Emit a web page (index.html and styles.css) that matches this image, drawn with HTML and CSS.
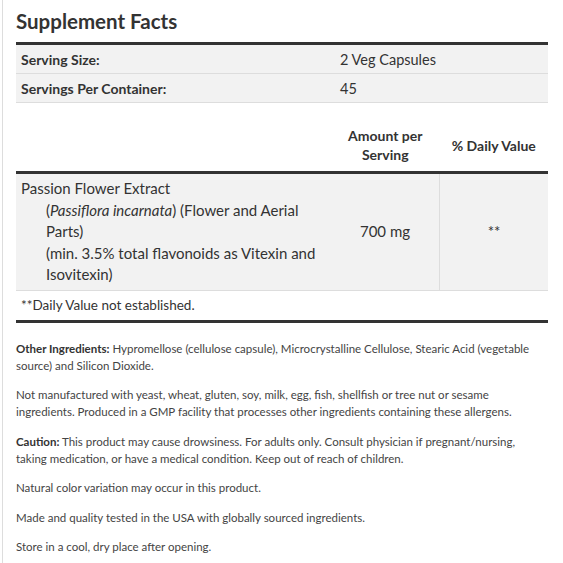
FILE: index.html
```html
<!DOCTYPE html>
<html>
<head>
<meta charset="utf-8">
<link rel="stylesheet" href="styles.css">
</head>
<body>
<div class="page">
  <h2 class="title">Supplement Facts</h2>
  <table class="facts serving">
    <tr class="shade">
      <td class="label">Serving Size:</td>
      <td class="val">2 Veg Capsules</td>
    </tr>
    <tr class="shade">
      <td class="label">Servings Per Container:</td>
      <td class="val">45</td>
    </tr>
  </table>
  <table class="facts nutrients">
    <tr class="head">
      <th class="name"></th>
      <th class="amt">Amount per<br>Serving</th>
      <th class="dv">% Daily Value</th>
    </tr>
    <tr class="shade ing">
      <td class="name">Passion Flower Extract
        <div class="sub">(<em>Passiflora incarnata</em>) (Flower and Aerial Parts)<br>(min. 3.5% total flavonoids as Vitexin and Isovitexin)</div>
      </td>
      <td class="amt">700 mg</td>
      <td class="dv">**</td>
    </tr>
    <tr class="foot">
      <td colspan="3">**Daily Value not established.</td>
    </tr>
  </table>
  <div class="notes">
    <p><strong>Other Ingredients:</strong> Hypromellose (cellulose capsule), Microcrystalline Cellulose, Stearic Acid (vegetable source) and Silicon Dioxide.</p>
    <p>Not manufactured with yeast, wheat, gluten, soy, milk, egg, fish, shellfish or tree nut or sesame ingredients. Produced in a GMP facility that processes other ingredients containing these allergens.</p>
    <p><strong>Caution:</strong> This product may cause drowsiness. For adults only. Consult physician if pregnant/nursing, taking medication, or have a medical condition. Keep out of reach of children.</p>
    <p>Natural color variation may occur in this product.</p>
    <p>Made and quality tested in the USA with globally sourced ingredients.</p>
    <p>Store in a cool, dry place after opening.</p>
  </div>
</div>
</body>
</html>
```
FILE: styles.css
```css
html, body {
  margin: 0;
  padding: 0;
  background: #fff;
}
body {
  font-family: Lato, "Open Sans", sans-serif;
  color: #333;
}
.page {
  margin-left: 2px;
  border-left: 1px solid #ddd;
  padding: 8px 15px 0 13px;
  min-height: 563px;
  box-sizing: border-box;
}
.title {
  margin: 0;
  font-size: 20.5px;
  font-weight: 700;
  line-height: 26px;
  color: #333;
  padding-bottom: 8px;
}
.facts {
  width: 100%;
  border-collapse: collapse;
  font-size: 15px;
}
.serving {
  border-top: 3px solid #333;
}
.serving td {
  height: 28px;
  padding: 0 5px;
  border-bottom: 1px solid #ddd;
  vertical-align: middle;
}
.serving .label {
  width: 309px;
  font-weight: 700;
  font-size: 14px;
}
.serving .val {
  font-size: 14.5px;
}
.shade td {
  background: #f2f2f2;
}
.nutrients .head th {
  height: 52px;
  font-weight: 700;
  font-size: 14px;
  line-height: 19px;
  vertical-align: middle;
  border-bottom: 3px solid #333;
  padding: 16px 0 0;
}
.nutrients .amt, .nutrients .dv {
  width: 106px;
  text-align: center;
}
.ing td {
  vertical-align: middle;
  line-height: 21.5px;
  border-bottom: 1px solid #ddd;
}
.ing .name {
  padding: 4px 5px 4px;
}
.ing .sub {
  padding-left: 25px;
}
.ing .dv {
  border-left: 1px solid #ddd;
}
.foot td {
  height: 29px;
  padding: 0 5px;
  font-size: 13.5px;
  border-bottom: 3px solid #333;
}
.notes {
  padding-top: 17px;
  font-size: 11.5px;
  line-height: 17px;
  color: #444;
}
.notes p {
  margin: 0 0 12.5px;
}
.notes strong {
  font-weight: 700;
  color: #333;
}
```
